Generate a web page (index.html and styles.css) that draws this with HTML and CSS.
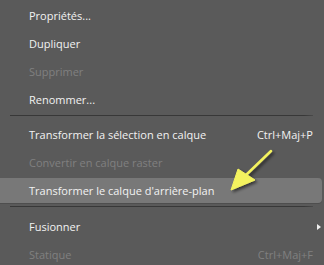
FILE: index.html
```html
<!DOCTYPE html>
<html lang="fr">
<head>
  <meta charset="UTF-8">
  <title>Menu calque</title>
  <link rel="stylesheet" href="styles.css">
</head>
<body>
  <ul class="menu">
    <li class="item">Propriétés...</li>
    <li class="item">Dupliquer</li>
    <li class="item disabled">Supprimer</li>
    <li class="item">Renommer...</li>
    <li class="sep sep-first"></li>
    <li class="item">Transformer la sélection en calque <span class="key">Ctrl+Maj+P</span></li>
    <li class="item disabled">Convertir en calque raster</li>
    <li class="item active">Transformer le calque d'arrière-plan</li>
    <li class="sep sep-second"></li>
    <li class="item">Fusionner <span class="sub"></span></li>
    <li class="item disabled">Statique <span class="key">Ctrl+Maj+F</span></li>
  </ul>

  <!-- yellow pointer arrow drawn on top of the screenshot -->
  <svg class="pointer" width="324" height="265" viewBox="0 0 324 265">
    <defs>
      <filter id="shadow" x="-20%" y="-20%" width="160%" height="160%">
        <feDropShadow dx="2" dy="2" stdDeviation="1.5" flood-color="#000" flood-opacity="0.55"/>
      </filter>
    </defs>
    <g filter="url(#shadow)" fill="#f4f35f" stroke="#f4f35f">
      <line x1="271" y1="151" x2="245" y2="176" stroke-width="2.5" stroke-linecap="round"/>
      <polygon points="231,190 238,169 255,180" stroke-width="1" stroke-linejoin="round"/>
    </g>
  </svg>
</body>
</html>
```

FILE: styles.css
```css
/* menu contextuel - calques */
body {
  margin: 0;
  padding: 0;
  width: 324px;
  height: 265px;
  overflow: hidden;
  background: #5a5a5a;
  font-family: "Open Sans", "Noto Sans", sans-serif;
  font-size: 11px;
  color: #f2f2f2;
}
.menu {
  list-style: none;
  margin: 0;
  padding: 3px 0 0 0;
}
.item {
  display: flex;
  align-items: center;
  height: 25px;
  margin-bottom: 3px;
  padding: 0 11px 0 29px;
}
.item.disabled {
  color: #808080;
}
.item.active {
  background: #787878;
  border-radius: 0 4px 4px 0;
  margin-right: 2px;
  box-shadow: 0 1px 0 #4e4e4e;
}
.key {
  margin-left: auto;
}
.sub {
  margin-left: auto;
  margin-right: -8px;
  width: 0;
  height: 0;
  border-top: 3.5px solid transparent;
  border-bottom: 3.5px solid transparent;
  border-left: 4px solid #f0f0f0;
}
.sep {
  height: 1px;
  margin-left: 10px;
  margin-right: 11px;
  background: linear-gradient(to right, #383838 97%, #4a4a4a);
}
.sep-first {
  margin-top: 0;
  margin-bottom: 6px;
}
.sep-second {
  margin-top: 2px;
  margin-bottom: 7px;
}
.pointer {
  position: absolute;
  left: 0;
  top: 0;
  pointer-events: none;
}
```
